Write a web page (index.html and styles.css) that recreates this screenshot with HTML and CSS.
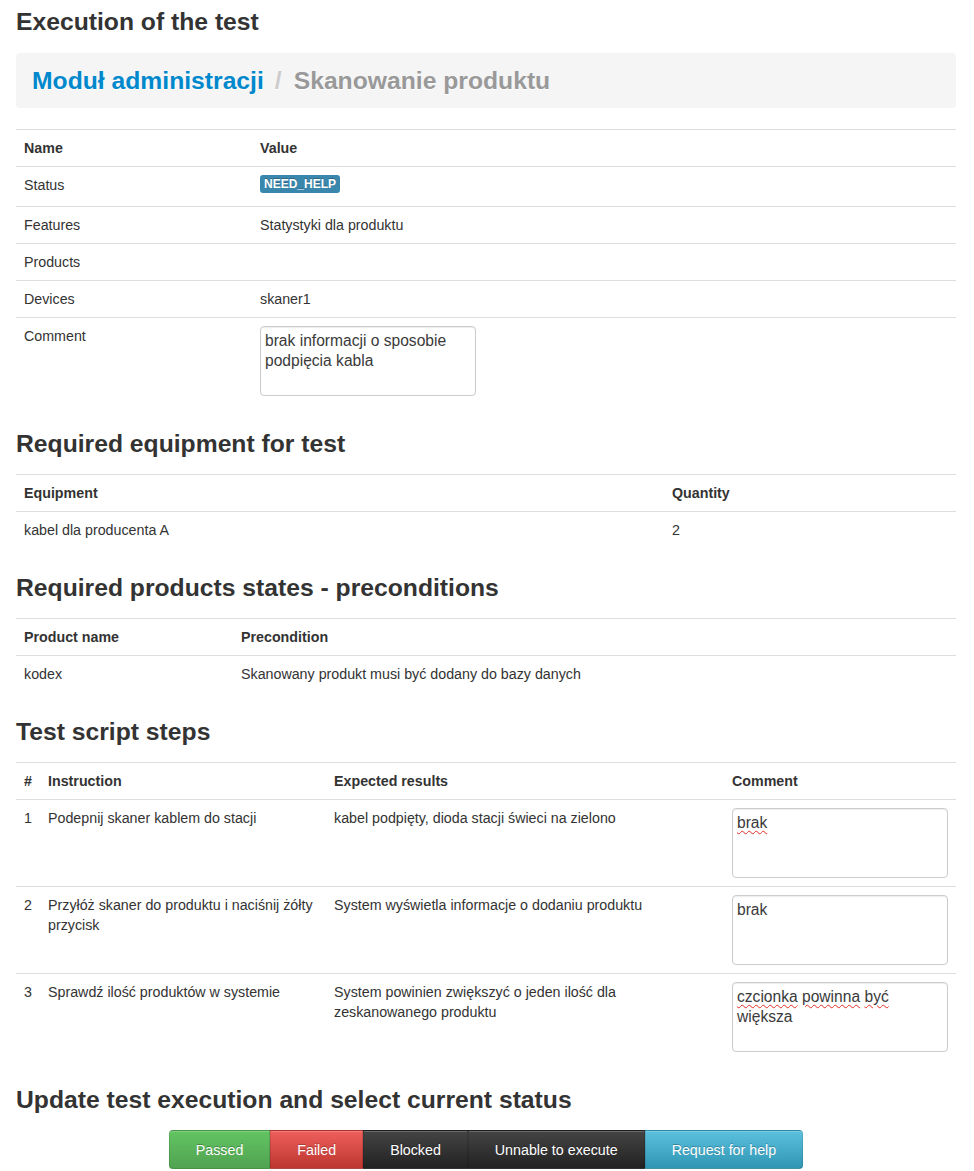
FILE: index.html
```html
<!DOCTYPE html>
<html lang="pl">
<head>
<meta charset="utf-8">
<title>Execution of the test</title>
<link rel="stylesheet" href="styles.css">
</head>
<body>
<div class="container">
  <h3 class="page-title">Execution of the test</h3>
  <ul class="breadcrumb">
    <li><a href="#">Moduł administracji</a></li>
    <li class="divider">/</li>
    <li class="active">Skanowanie produktu</li>
  </ul>

  <table class="table">
    <colgroup><col class="w-236"><col></colgroup>
    <thead><tr><th>Name</th><th>Value</th></tr></thead>
    <tbody>
      <tr><td>Status</td><td><span class="label label-info">NEED_HELP</span></td></tr>
      <tr><td>Features</td><td>Statystyki dla produktu</td></tr>
      <tr><td>Products</td><td></td></tr>
      <tr><td>Devices</td><td>skaner1</td></tr>
      <tr><td>Comment</td><td><div class="textbox">brak informacji o sposobie podpięcia kabla</div></td></tr>
    </tbody>
  </table>

  <h3>Required equipment for test</h3>
  <table class="table">
    <colgroup><col class="w-648"><col></colgroup>
    <thead><tr><th>Equipment</th><th>Quantity</th></tr></thead>
    <tbody>
      <tr><td>kabel dla producenta A</td><td>2</td></tr>
    </tbody>
  </table>

  <h3>Required products states - preconditions</h3>
  <table class="table">
    <colgroup><col class="w-217"><col></colgroup>
    <thead><tr><th>Product name</th><th>Precondition</th></tr></thead>
    <tbody>
      <tr><td>kodex</td><td>Skanowany produkt musi być dodany do bazy danych</td></tr>
    </tbody>
  </table>

  <h3>Test script steps</h3>
  <table class="table">
    <colgroup><col class="w-24"><col class="w-286"><col class="w-398"><col></colgroup>
    <thead><tr><th>#</th><th>Instruction</th><th>Expected results</th><th>Comment</th></tr></thead>
    <tbody>
      <tr>
        <td>1</td>
        <td>Podepnij skaner kablem do stacji</td>
        <td>kabel podpięty, dioda stacji świeci na zielono</td>
        <td><div class="textbox"><span class="misspelled">brak</span></div></td>
      </tr>
      <tr>
        <td>2</td>
        <td>Przyłóż skaner do produktu i naciśnij żółty przycisk</td>
        <td>System wyświetla informacje o dodaniu produktu</td>
        <td><div class="textbox">brak</div></td>
      </tr>
      <tr>
        <td>3</td>
        <td>Sprawdź ilość produktów w systemie</td>
        <td>System powinien zwiększyć o jeden ilość dla zeskanowanego produktu</td>
        <td><div class="textbox"><span class="misspelled">czcionka</span> <span class="misspelled">powinna</span> <span class="misspelled">być</span> większa</div></td>
      </tr>
    </tbody>
  </table>

  <h3>Update test execution and select current status</h3>
  <div class="actions">
    <div class="btn-group">
      <button class="btn btn-success">Passed</button>
      <button class="btn btn-danger">Failed</button>
      <button class="btn btn-inverse">Blocked</button>
      <button class="btn btn-inverse">Unnable to execute</button>
      <button class="btn btn-info">Request for help</button>
    </div>
  </div>
</div>
</body>
</html>
```

FILE: styles.css
```css
html, body {
  margin: 0;
  padding: 0;
  background: #fff;
}

body {
  font-family: "Liberation Sans", Arial, sans-serif;
  font-size: 14.25px;
  line-height: 20px;
  color: #333;
}

.container {
  width: 940px;
  padding: 2px 16px 0 16px;
}

h3 {
  font-size: 24.7px;
  font-weight: bold;
  line-height: 40px;
  margin: 20px 0 10px;
  color: #333;
}

.page-title {
  margin: 0 0 11px;
}

.breadcrumb {
  list-style: none;
  margin: 0 0 21px;
  padding: 8px 16px;
  background: #f5f5f5;
  border-radius: 4px;
  display: flex;
  align-items: center;
  font-size: 24.7px;
  font-weight: bold;
  line-height: 39px;
  text-shadow: 0 1px 0 #fff;
}

.breadcrumb a {
  color: #0088cc;
  text-decoration: none;
}

.breadcrumb .divider {
  color: #ccc;
  padding: 0 12px 0 11px;
}

.breadcrumb .active {
  color: #999;
}

.table {
  width: 100%;
  border-collapse: collapse;
  border-spacing: 0;
  table-layout: fixed;
  margin-bottom: 20px;
}

.table th,
.table td {
  padding: 8px;
  line-height: 20px;
  text-align: left;
  vertical-align: top;
  border-top: 1px solid #ddd;
}

.table th {
  font-weight: bold;
}

.w-236 { width: 236px; }
.w-648 { width: 648px; }
.w-217 { width: 217px; }
.w-24 { width: 24px; }
.w-286 { width: 286px; }
.w-398 { width: 398px; }

.label {
  display: inline-block;
  vertical-align: top;
  margin-bottom: 5px;
  padding: 2px 4px;
  font-size: 12px;
  font-weight: bold;
  line-height: 14px;
  color: #fff;
  text-shadow: 0 -1px 0 rgba(0, 0, 0, 0.25);
  border-radius: 3px;
}

.label-info {
  background: #3a87ad;
}

.textbox {
  box-sizing: border-box;
  width: 216px;
  height: 70px;
  padding: 4px 5px 4px 4px;
  border: 1px solid #ccc;
  border-radius: 4px;
  background: #fff;
  box-shadow: inset 0 1px 1px rgba(0, 0, 0, 0.075);
  font-size: 15.6px;
  line-height: 20px;
  color: #3a3a3a;
  overflow: hidden;
}

.misspelled {
  text-decoration: underline wavy #e0302a;
  text-decoration-thickness: 1px;
  text-underline-offset: 2px;
}

.actions {
  display: flex;
  justify-content: center;
}

.btn-group {
  display: inline-flex;
}

.btn {
  font-family: "Liberation Sans", Arial, sans-serif;
  font-size: 14.25px;
  line-height: 20px;
  padding: 9px 26px 8px;
  margin: 0;
  color: #fff;
  text-shadow: 0 -1px 0 rgba(0, 0, 0, 0.25);
  border: 1px solid rgba(0, 0, 0, 0.1);
  border-bottom-color: rgba(0, 0, 0, 0.25);
  border-radius: 0;
  box-shadow: inset 0 1px 0 rgba(255, 255, 255, 0.2), 0 1px 2px rgba(0, 0, 0, 0.05);
  cursor: pointer;
}

.btn:first-child {
  border-radius: 4px 0 0 4px;
}

.btn:last-child {
  border-radius: 0 4px 4px 0;
}

.btn-success {
  background: linear-gradient(#62c462, #51a351);
}

.btn-danger {
  background: linear-gradient(#ee5f5b, #bd362f);
}

.btn-inverse {
  background: linear-gradient(#444444, #222222);
}

.btn-info {
  background: linear-gradient(#5bc0de, #2f96b4);
}
```
